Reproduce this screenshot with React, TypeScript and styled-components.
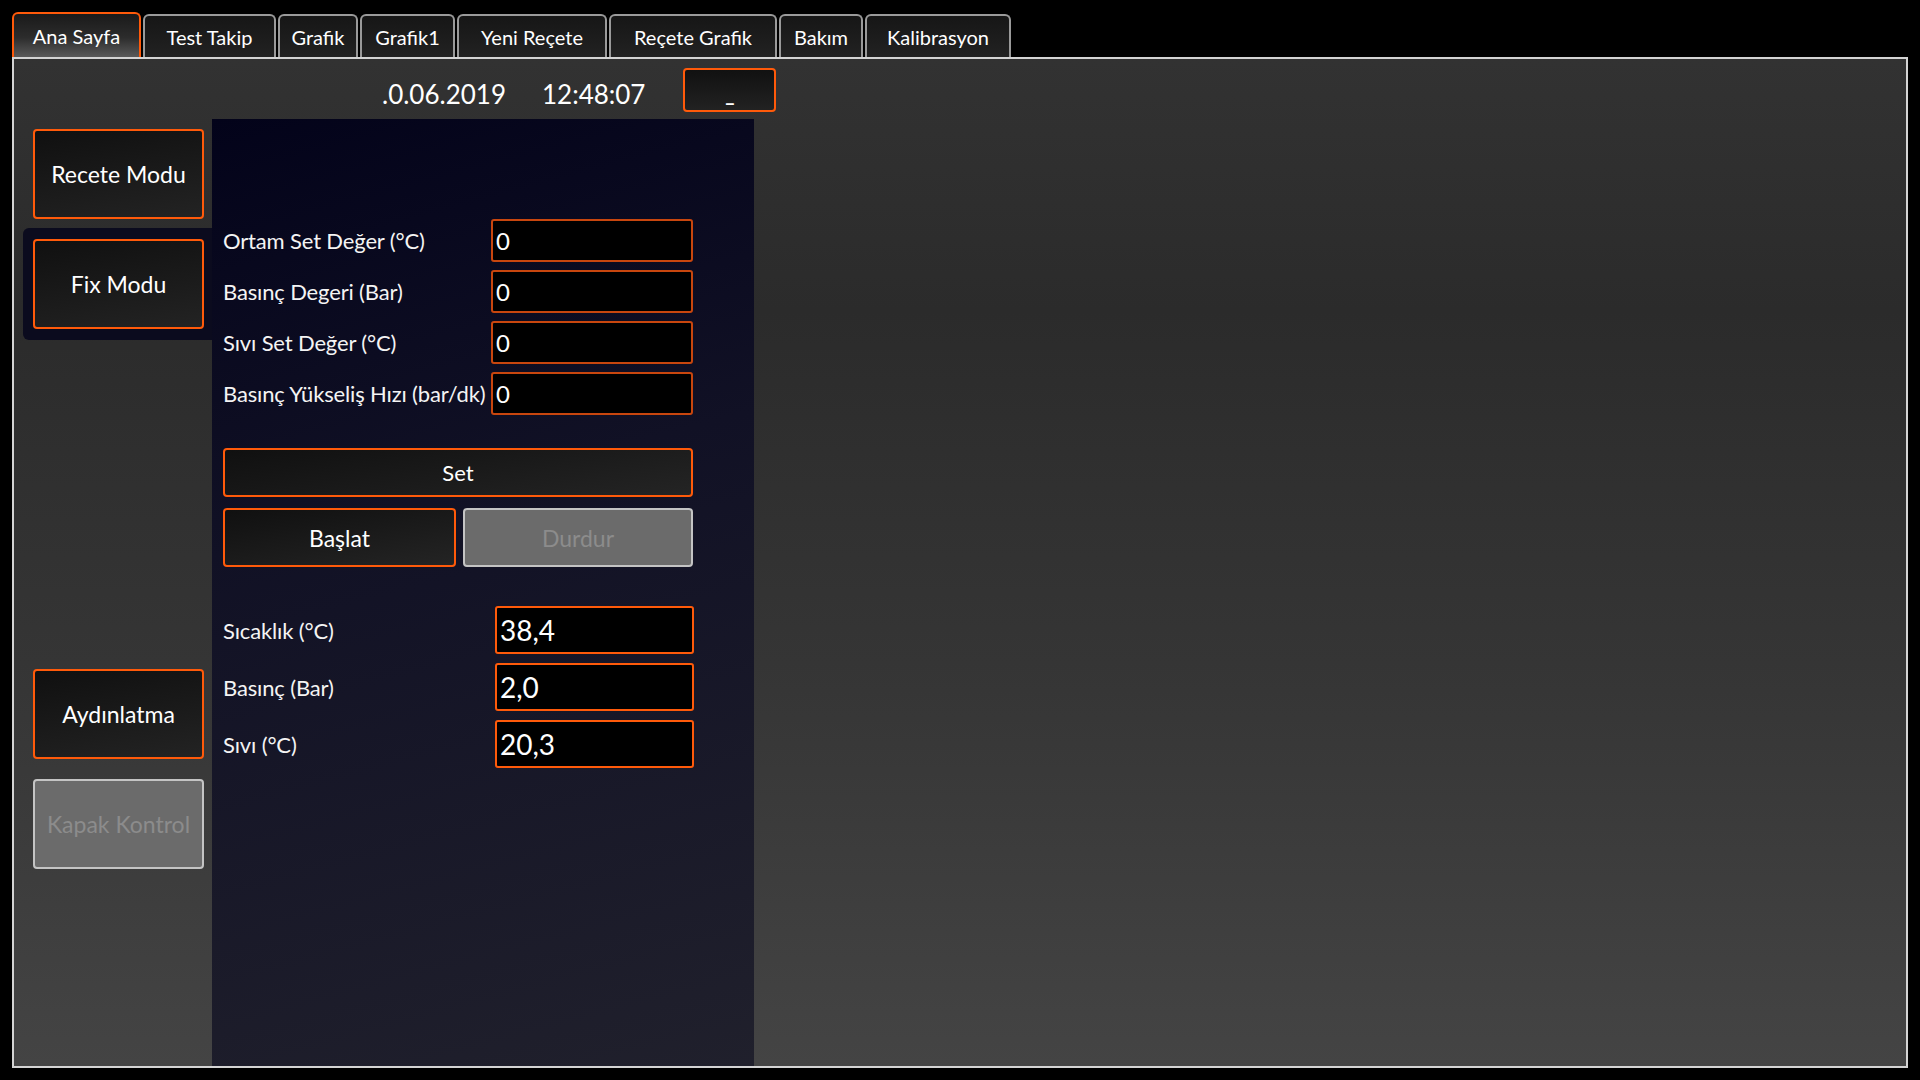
import * as React from "react";
import styled, { createGlobalStyle, css } from "styled-components";

const ORANGE = "#ff5a0a";

const GlobalStyle = createGlobalStyle`
  html, body {
    margin: 0;
    padding: 0;
    background: #000;
  }
  body {
    font-family: Lato, "Open Sans", sans-serif;
    color: #fff;
  }
`;

const tabs = [
  { label: "Ana Sayfa", width: 129 },
  { label: "Test Takip", width: 133 },
  { label: "Grafik", width: 80 },
  { label: "Grafik1", width: 95 },
  { label: "Yeni Reçete", width: 150 },
  { label: "Reçete Grafik", width: 168 },
  { label: "Bakım", width: 84 },
  { label: "Kalibrasyon", width: 146 },
];

const setFields = [
  "Ortam Set Değer (°C)",
  "Basınç Degeri (Bar)",
  "Sıvı Set Değer (°C)",
  "Basınç Yükseliş Hızı (bar/dk)",
];

const readings = [
  { label: "Sıcaklık (°C)", value: "38,4" },
  { label: "Basınç (Bar)", value: "2,0" },
  { label: "Sıvı (°C)", value: "20,3" },
];

export default function App() {
  return (
    <>
      <GlobalStyle />
      <Screen>
        <TabBar>
          {tabs.map((t, i) => (
            <Tab key={t.label} $width={t.width} $active={i === 0}>
              {t.label}
            </Tab>
          ))}
        </TabBar>
        <Panel>
          <Header>
            <Clock>.0.06.2019</Clock>
            <Clock>12:48:07</Clock>
            <MinimizeButton>_</MinimizeButton>
          </Header>
          <Body>
            <ModeColumn>
              <SideButton>Recete Modu</SideButton>
              <SelectedSlot>
                <SideButton>Fix Modu</SideButton>
              </SelectedSlot>
              <LowerGroup>
                <SideButton>Aydınlatma</SideButton>
                <SideButton $disabled>Kapak Kontrol</SideButton>
              </LowerGroup>
            </ModeColumn>
            <FixPanel>
              <SetForm>
                {setFields.map((f) => (
                  <React.Fragment key={f}>
                    <FieldLabel>{f}</FieldLabel>
                    <SetInput>0</SetInput>
                  </React.Fragment>
                ))}
              </SetForm>
              <WideButton>Set</WideButton>
              <ButtonRow>
                <ActionButton>Başlat</ActionButton>
                <ActionButton $disabled>Durdur</ActionButton>
              </ButtonRow>
              <ReadForm>
                {readings.map((r) => (
                  <React.Fragment key={r.label}>
                    <FieldLabel>{r.label}</FieldLabel>
                    <ReadBox>{r.value}</ReadBox>
                  </React.Fragment>
                ))}
              </ReadForm>
            </FixPanel>
          </Body>
        </Panel>
      </Screen>
    </>
  );
}

const Screen = styled.div`
  width: 1920px;
  height: 1080px;
  padding: 12px 0 0 12px;
  box-sizing: border-box;
  background: #000;
`;

const TabBar = styled.div`
  display: flex;
  align-items: flex-end;
  gap: 2px;
  height: 45px;
`;

const Tab = styled.div<{ $width: number; $active?: boolean }>`
  width: ${(p) => p.$width}px;
  height: 43px;
  box-sizing: border-box;
  display: flex;
  align-items: center;
  justify-content: center;
  padding-top: 1px;
  font-size: 20px;
  color: #fff;
  border: 2px solid #9a9a9a;
  border-bottom: none;
  border-radius: 6px 6px 0 0;
  background: linear-gradient(180deg, #161616 0%, #222 100%);
  ${(p) =>
    p.$active &&
    css`
      height: 45px;
      padding-top: 0;
      border-color: ${ORANGE};
      background: linear-gradient(180deg, #1a1a1a 0%, #2c2c2c 55%, #5a5a5a 100%);
    `}
`;

const Panel = styled.div`
  width: 1896px;
  height: 1011px;
  box-sizing: border-box;
  border: 2px solid #d4d4d4;
  display: flex;
  flex-direction: column;
  background: linear-gradient(180deg, #323232 0%, #2b2b2b 25%, #353535 60%, #444 100%);
`;

const Header = styled.div`
  height: 60px;
  flex-shrink: 0;
  display: flex;
  align-items: center;
  padding-left: 368px;
`;

const Clock = styled.span`
  font-size: 26px;
  color: #fff;
  margin-right: 36px;
  padding-top: 9px;
`;

const MinimizeButton = styled.div`
  width: 93px;
  height: 44px;
  margin-top: 2px;
  margin-left: 2px;
  box-sizing: border-box;
  border: 2px solid ${ORANGE};
  border-radius: 4px;
  background: linear-gradient(180deg, #111 0%, #222 100%);
  display: flex;
  align-items: flex-end;
  justify-content: center;
  font-size: 20px;
  font-weight: 700;
  line-height: 1;
  padding-bottom: 6px;
`;

const Body = styled.div`
  flex: 1;
  display: flex;
`;

const ModeColumn = styled.div`
  width: 198px;
  padding-top: 10px;
  display: flex;
  flex-direction: column;
  align-items: flex-end;
`;

const SideButton = styled.div<{ $disabled?: boolean }>`
  width: 171px;
  height: 90px;
  margin-right: 8px;
  box-sizing: border-box;
  border: 2px solid ${ORANGE};
  border-radius: 4px;
  background: linear-gradient(170deg, #101010 0%, #232323 100%);
  display: flex;
  align-items: center;
  justify-content: center;
  font-size: 23px;
  color: #fff;
  white-space: nowrap;
  ${(p) =>
    p.$disabled &&
    css`
      border-color: #c4c4c4;
      background: #6b6b6b;
      color: #8c8c8c;
    `}
`;

const SelectedSlot = styled.div`
  width: 189px;
  margin-top: 9px;
  padding: 11px 0;
  display: flex;
  justify-content: flex-end;
  background: #0b0b1e;
  border-radius: 6px 0 0 6px;
`;

const LowerGroup = styled.div`
  margin-top: 329px;
  display: flex;
  flex-direction: column;
  gap: 20px;
`;

const FixPanel = styled.div`
  width: 542px;
  padding: 100px 0 0 11px;
  box-sizing: border-box;
  display: flex;
  flex-direction: column;
  background: linear-gradient(165deg, #03031a 0%, #111125 40%, #20202c 100%);
`;

const SetForm = styled.div`
  display: grid;
  grid-template-columns: 268px 202px;
  row-gap: 8px;
  align-items: center;
`;

const FieldLabel = styled.div`
  font-size: 22px;
  letter-spacing: -0.15px;
  color: #f4f4f4;
  white-space: nowrap;
`;

const SetInput = styled.div`
  height: 43px;
  box-sizing: border-box;
  border: 2px solid #c8460e;
  border-radius: 3px;
  background: #000;
  display: flex;
  align-items: center;
  padding-left: 3px;
  font-size: 24px;
  color: #fff;
`;

const baseButton = css`
  box-sizing: border-box;
  border: 2px solid ${ORANGE};
  border-radius: 4px;
  background: linear-gradient(170deg, #101010 0%, #242424 100%);
  display: flex;
  align-items: center;
  justify-content: center;
  font-size: 22px;
  color: #fff;
`;

const WideButton = styled.div`
  ${baseButton};
  width: 470px;
  height: 49px;
  margin-top: 33px;
`;

const ButtonRow = styled.div`
  display: grid;
  grid-template-columns: 233px 230px;
  gap: 7px;
  margin-top: 11px;
`;

const ActionButton = styled.div<{ $disabled?: boolean }>`
  ${baseButton};
  height: 59px;
  font-size: 23px;
  ${(p) =>
    p.$disabled &&
    css`
      border-color: #c4c4c4;
      background: #6b6b6b;
      color: #8c8c8c;
    `}
`;

const ReadForm = styled.div`
  display: grid;
  grid-template-columns: 272px 199px;
  row-gap: 9px;
  align-items: center;
  margin-top: 39px;
`;

const ReadBox = styled.div`
  height: 48px;
  box-sizing: border-box;
  border: 2px solid ${ORANGE};
  border-radius: 3px;
  background: #000;
  display: flex;
  align-items: center;
  padding-left: 3px;
  font-size: 28px;
  color: #fff;
`;
